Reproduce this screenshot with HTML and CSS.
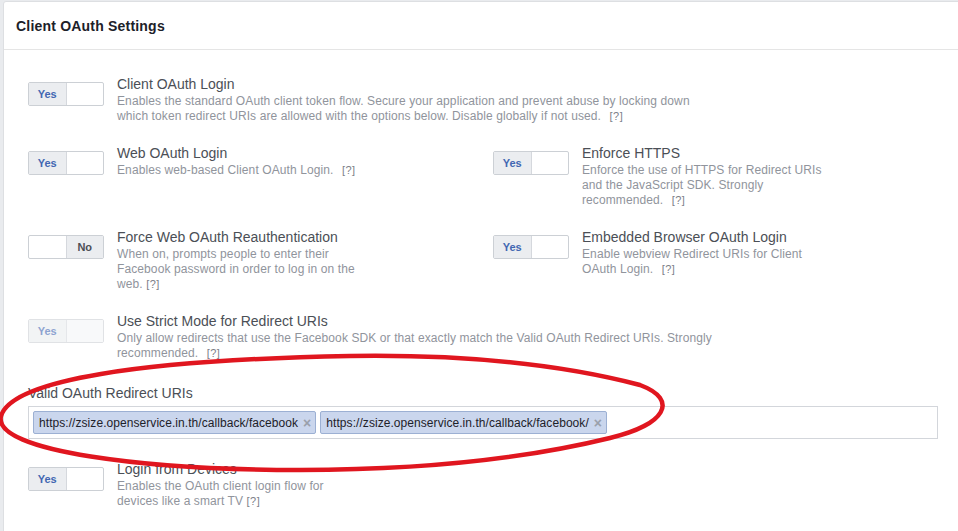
FILE: index.html
```html
<!DOCTYPE html>
<html lang="en">
<head>
    <meta charset="UTF-8">
    <meta name="viewport" content="width=device-width, initial-scale=1.0">
    <title>Client OAuth Settings</title>
    <link rel="stylesheet" href="styles.css">
</head>
<body>
    <div class="panel">
        <div class="panel-header">Client OAuth Settings</div>
        <div class="panel-body">

            <div class="setting-row">
                <div class="setting wide">
                    <div class="toggle"><span class="on">Yes</span><span></span></div>
                    <div class="setting-text">
                        <div class="setting-title">Client OAuth Login</div>
                        <div class="setting-desc">Enables the standard OAuth client token flow. Secure your application and prevent abuse by locking down which token redirect URIs are allowed with the options below. Disable globally if not used. <span class="help">[?]</span></div>
                    </div>
                </div>
            </div>

            <div class="setting-row">
                <div class="setting">
                    <div class="toggle"><span class="on">Yes</span><span></span></div>
                    <div class="setting-text">
                        <div class="setting-title">Web OAuth Login</div>
                        <div class="setting-desc">Enables web-based Client OAuth Login. <span class="help">[?]</span></div>
                    </div>
                </div>
                <div class="setting">
                    <div class="toggle"><span class="on">Yes</span><span></span></div>
                    <div class="setting-text">
                        <div class="setting-title">Enforce HTTPS</div>
                        <div class="setting-desc">Enforce the use of HTTPS for Redirect URIs and the JavaScript SDK. Strongly recommended. <span class="help">[?]</span></div>
                    </div>
                </div>
            </div>

            <div class="setting-row">
                <div class="setting">
                    <div class="toggle"><span></span><span class="off">No</span></div>
                    <div class="setting-text">
                        <div class="setting-title">Force Web OAuth Reauthentication</div>
                        <div class="setting-desc">When on, prompts people to enter their Facebook password in order to log in on the web. <span class="help small-gap">[?]</span></div>
                    </div>
                </div>
                <div class="setting">
                    <div class="toggle"><span class="on">Yes</span><span></span></div>
                    <div class="setting-text">
                        <div class="setting-title">Embedded Browser OAuth Login</div>
                        <div class="setting-desc">Enable webview Redirect URIs for Client OAuth Login. <span class="help">[?]</span></div>
                    </div>
                </div>
            </div>

            <div class="setting-row">
                <div class="setting wide">
                    <div class="toggle disabled"><span class="on">Yes</span><span></span></div>
                    <div class="setting-text">
                        <div class="setting-title">Use Strict Mode for Redirect URIs</div>
                        <div class="setting-desc">Only allow redirects that use the Facebook SDK or that exactly match the Valid OAuth Redirect URIs. Strongly recommended. <span class="help">[?]</span></div>
                    </div>
                </div>
            </div>

            <div class="field">
                <label class="field-label">Valid OAuth Redirect URIs</label>
                <div class="token-input">
                    <span class="token">https://zsize.openservice.in.th/callback/facebook<span class="token-remove">×</span></span>
                    <span class="token">https://zsize.openservice.in.th/callback/facebook/<span class="token-remove">×</span></span>
                </div>
            </div>

            <div class="setting-row">
                <div class="setting">
                    <div class="toggle"><span class="on">Yes</span><span></span></div>
                    <div class="setting-text">
                        <div class="setting-title">Login from Devices</div>
                        <div class="setting-desc">Enables the OAuth client login flow for devices like a smart TV <span class="help small-gap">[?]</span></div>
                    </div>
                </div>
            </div>

        </div>
    </div>

    <!-- red annotation drawn over the screenshot -->
    <svg class="annotation" width="958" height="531" viewBox="0 0 958 531">
        <path d="M 1,416 C 12,380 140,360 350,356 C 480,354 575,368 640,385 C 680,400 665,425 610,438 C 520,460 420,470 300,470 C 150,470 -8,452 1,416 Z"
              fill="none" stroke="#e0161f" stroke-width="4.5"/>
    </svg>
</body>
</html>
```

FILE: styles.css
```css
:root {
    --text-dark: #1d2129;
    --text-title: #4b4f56;
    --text-muted: #90949c;
    --border-color: #dddfe2;
    --toggle-border: #ccd0d5;
    --blue: #4267b2;
}

* {
    margin: 0;
    padding: 0;
    box-sizing: border-box;
}

body {
    font-family: "Liberation Sans", Arial, Helvetica, sans-serif;
    background-color: #e9ebee;
    overflow: hidden;
}

.panel {
    margin: 1px 0 0 3px;
    width: 1000px;
    min-height: 560px;
    background: #fff;
    border: 1px solid var(--border-color);
    border-radius: 3px;
}

.panel-header {
    height: 48px;
    padding: 0 12px;
    display: flex;
    align-items: center;
    border-bottom: 1px solid #e5e5e5;
    font-size: 14px;
    font-weight: bold;
    letter-spacing: 0.2px;
    color: var(--text-dark);
}

.panel-body {
    padding: 24px 24px;
}

.setting-row {
    display: flex;
    margin-bottom: 19px;
}

.setting {
    display: flex;
    align-items: flex-start;
    width: 465px;
}

.setting.wide {
    width: auto;
}

.setting.wide .setting-desc {
    width: 600px;
}

.toggle {
    display: flex;
    flex-shrink: 0;
    width: 76px;
    height: 24px;
    margin-top: 8px;
    border: 1px solid var(--toggle-border);
    border-radius: 2px;
    overflow: hidden;
    font-size: 11px;
    font-weight: bold;
}

.toggle span {
    flex: 1;
    display: flex;
    align-items: center;
    justify-content: center;
}

.toggle .on {
    background: #ebedf0;
    color: var(--blue);
    border-right: 1px solid #d5d8dd;
}

.toggle .off {
    background: #ebedf0;
    color: var(--text-title);
    border-left: 1px solid #d5d8dd;
}

.toggle.disabled {
    opacity: 0.6;
}

.toggle.disabled span:last-child {
    background: #f5f6f7;
}

.setting-text {
    margin-left: 13px;
}

.setting-title {
    font-size: 14px;
    line-height: 20px;
    color: var(--text-title);
}

.setting-desc {
    width: 246px;
    font-size: 12px;
    letter-spacing: 0.1px;
    line-height: 15px;
    color: var(--text-muted);
}

.help {
    margin-left: 5px;
    font-size: 11px;
    color: #7c8088;
    letter-spacing: 0.5px;
}

.help.small-gap {
    margin-left: 0;
}

.field {
    padding-top: 3px;
    margin-bottom: 20px;
}

.field-label {
    display: block;
    font-size: 14px;
    line-height: 20px;
    color: var(--text-title);
    margin-bottom: 3px;
}

.token-input {
    display: flex;
    gap: 4px;
    width: 910px;
    height: 33px;
    padding: 4px;
    border: 1px solid #d3d6db;
    background: #fff;
}

.token {
    display: flex;
    align-items: center;
    height: 23px;
    padding: 0 4px 0 5px;
    background: #cad6ed;
    border: 1px solid #9cb0d3;
    border-radius: 2px;
    font-size: 12px;
    letter-spacing: 0.06px;
    color: var(--text-dark);
}

.token-remove {
    margin-left: 5px;
    font-size: 14px;
    font-weight: bold;
    color: #9aa0ab;
}

.annotation {
    position: absolute;
    top: 0;
    left: 0;
    pointer-events: none;
}
```
